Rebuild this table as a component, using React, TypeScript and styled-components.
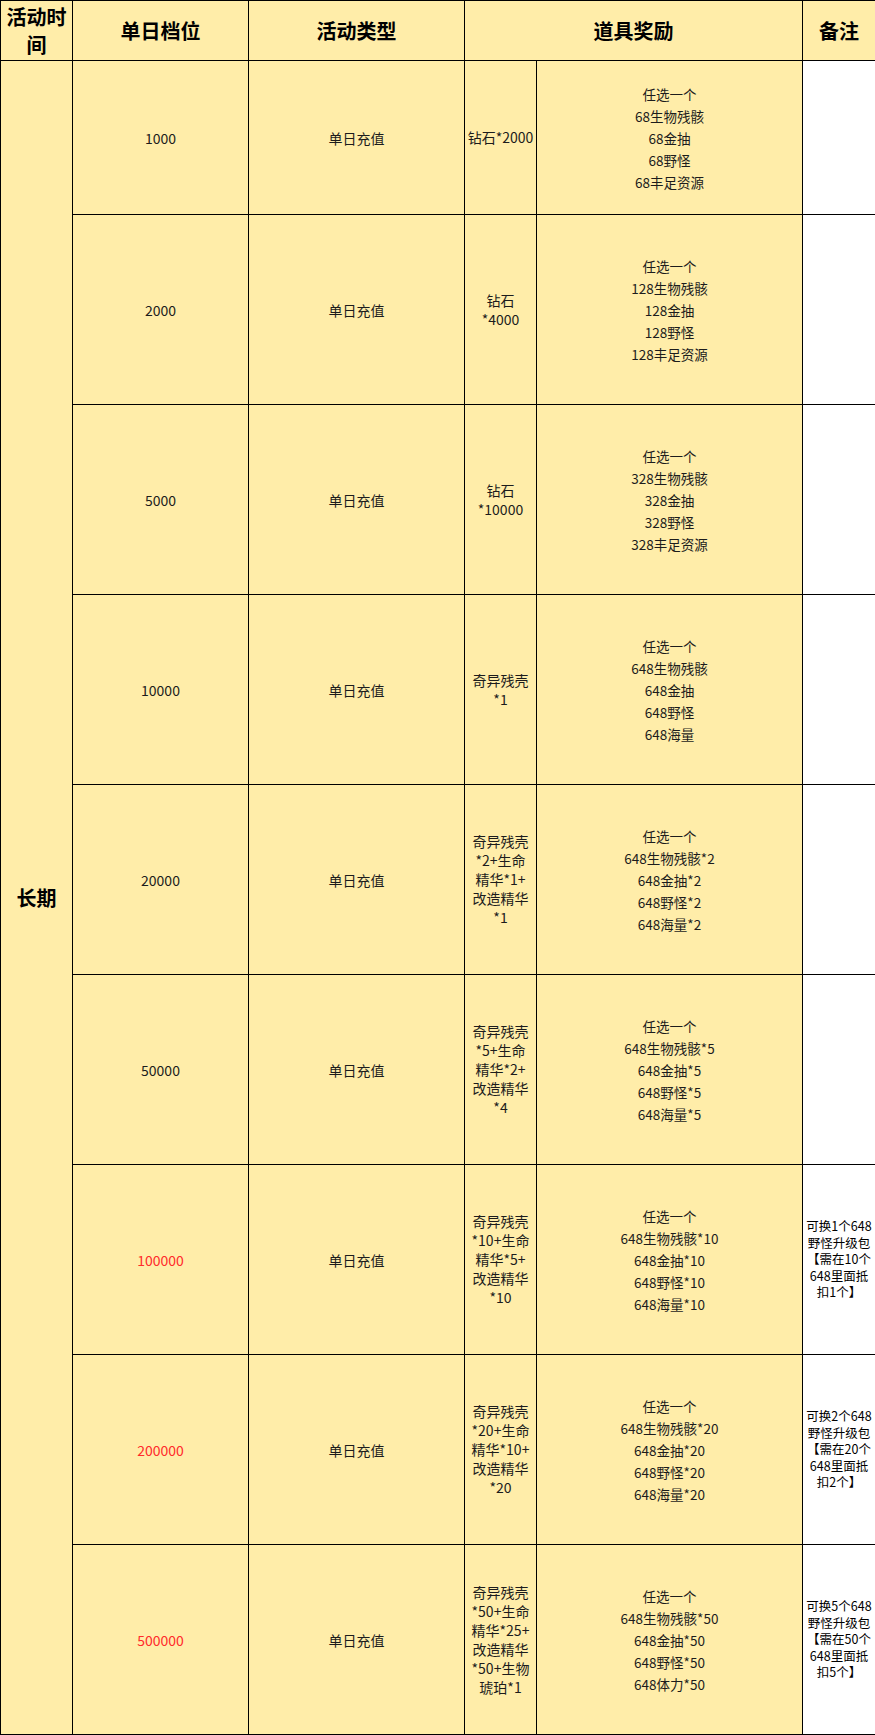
import React from 'react'
import styled, { createGlobalStyle } from 'styled-components'

const GlobalStyle = createGlobalStyle`
  html, body {
    margin: 0;
    padding: 0;
    background: #ffffff;
  }
  body {
    font-family: "Noto Sans CJK SC", "Noto Sans", sans-serif;
    color: #1c1c1c;
  }
`

interface IRow {
  tier: string
  red?: boolean
  items: string[]
  rewards: string[]
  note?: string[]
}

const rows: IRow[] = [
  {
    tier: '1000',
    items: ['钻石*2000'],
    rewards: ['任选一个', '68生物残骸', '68金抽', '68野怪', '68丰足资源'],
  },
  {
    tier: '2000',
    items: ['钻石', '*4000'],
    rewards: ['任选一个', '128生物残骸', '128金抽', '128野怪', '128丰足资源'],
  },
  {
    tier: '5000',
    items: ['钻石', '*10000'],
    rewards: ['任选一个', '328生物残骸', '328金抽', '328野怪', '328丰足资源'],
  },
  {
    tier: '10000',
    items: ['奇异残壳', '*1'],
    rewards: ['任选一个', '648生物残骸', '648金抽', '648野怪', '648海量'],
  },
  {
    tier: '20000',
    items: ['奇异残壳', '*2+生命', '精华*1+', '改造精华', '*1'],
    rewards: ['任选一个', '648生物残骸*2', '648金抽*2', '648野怪*2', '648海量*2'],
  },
  {
    tier: '50000',
    items: ['奇异残壳', '*5+生命', '精华*2+', '改造精华', '*4'],
    rewards: ['任选一个', '648生物残骸*5', '648金抽*5', '648野怪*5', '648海量*5'],
  },
  {
    tier: '100000',
    red: true,
    items: ['奇异残壳', '*10+生命', '精华*5+', '改造精华', '*10'],
    rewards: ['任选一个', '648生物残骸*10', '648金抽*10', '648野怪*10', '648海量*10'],
    note: ['可换1个648', '野怪升级包', '【需在10个', '648里面抵', '扣1个】'],
  },
  {
    tier: '200000',
    red: true,
    items: ['奇异残壳', '*20+生命', '精华*10+', '改造精华', '*20'],
    rewards: ['任选一个', '648生物残骸*20', '648金抽*20', '648野怪*20', '648海量*20'],
    note: ['可换2个648', '野怪升级包', '【需在20个', '648里面抵', '扣2个】'],
  },
  {
    tier: '500000',
    red: true,
    items: ['奇异残壳', '*50+生命', '精华*25+', '改造精华', '*50+生物', '琥珀*1'],
    rewards: ['任选一个', '648生物残骸*50', '648金抽*50', '648野怪*50', '648体力*50'],
    note: ['可换5个648', '野怪升级包', '【需在50个', '648里面抵', '扣5个】'],
  },
]

const App = () => {
  return (
    <>
      <GlobalStyle />
      <Table>
        <colgroup>
          <col style={{ width: 72 }} />
          <col style={{ width: 176 }} />
          <col style={{ width: 216 }} />
          <col style={{ width: 72 }} />
          <col style={{ width: 266 }} />
          <col style={{ width: 73 }} />
        </colgroup>
        <thead>
          <HeadRow>
            <HeadCell $small>活动时<br />间</HeadCell>
            <HeadCell>单日档位</HeadCell>
            <HeadCell>活动类型</HeadCell>
            <HeadCell colSpan={2}>道具奖励</HeadCell>
            <HeadCell>备注</HeadCell>
          </HeadRow>
        </thead>
        <tbody>
          {rows.map((row, i) => (
            <BodyRow key={row.tier} $first={i === 0}>
              {i === 0 && (
                <PeriodCell rowSpan={rows.length}>长期</PeriodCell>
              )}
              <Cell $red={row.red}>{row.tier}</Cell>
              <Cell>单日充值</Cell>
              <ItemCell>
                {row.items.map((line) => (
                  <Line key={line}>{line}</Line>
                ))}
              </ItemCell>
              <RewardCell>
                {row.rewards.map((line) => (
                  <Line key={line}>{line}</Line>
                ))}
              </RewardCell>
              <NoteCell>
                {row.note?.map((line) => (
                  <Line key={line}>{line}</Line>
                ))}
              </NoteCell>
            </BodyRow>
          ))}
        </tbody>
      </Table>
    </>
  )
}

export default App

const Table = styled.table`
  width: 875px;
  table-layout: fixed;
  border-collapse: collapse;
  background: #ffeda9;
`
const HeadRow = styled.tr`
  height: 60px;
`
const HeadCell = styled.th<{ $small?: boolean }>`
  border: 1px solid #000;
  padding: 0;
  font-size: 20px;
  font-weight: 700;
  line-height: ${(p) => (p.$small ? '28px' : '24px')};
  text-align: center;
  vertical-align: middle;
  color: #000;
`
const BodyRow = styled.tr<{ $first?: boolean }>`
  height: ${(p) => (p.$first ? '154px' : '190px')};
`
const Cell = styled.td<{ $red?: boolean }>`
  border: 1px solid #000;
  padding: 0;
  font-size: 14px;
  text-align: center;
  vertical-align: middle;
  color: ${(p) => (p.$red ? '#ff2b2b' : '#1c1c1c')};
`
const PeriodCell = styled(Cell)`
  font-size: 20px;
  font-weight: 700;
  color: #000;
`
const ItemCell = styled(Cell)`
  line-height: 19px;
  font-size: 14px;
`
const RewardCell = styled(Cell)`
  font-size: 13.5px;
  line-height: 22px;
`
const NoteCell = styled(Cell)`
  background: #ffffff;
  font-size: 12.5px;
  line-height: 16.5px;
  color: #000;
`
const Line = styled.div`
  white-space: nowrap;
`
